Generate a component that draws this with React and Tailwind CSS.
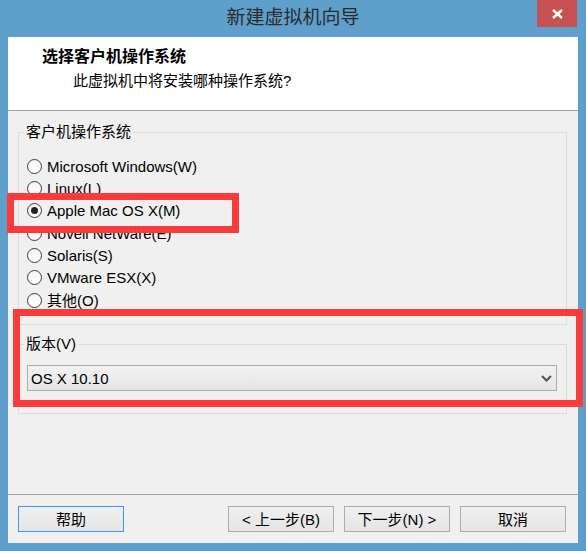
import { useState } from 'react';

const font = { fontFamily: '"Liberation Sans", "Noto Sans CJK SC", sans-serif' };

const osOptions = [
  'Microsoft Windows(W)',
  'Linux(L)',
  'Apple Mac OS X(M)',
  'Novell NetWare(E)',
  'Solaris(S)',
  'VMware ESX(X)',
  '其他(O)',
];

const Radio = ({ label, checked, onSelect }) => (
  <div className="flex items-center h-[22.33px] cursor-default" onClick={onSelect}>
    <span className="shrink-0 w-[15px] h-[15px] rounded-full border border-[#3c3c3c] bg-gradient-to-b from-[#f4f4f4] to-[#fff] flex items-center justify-center">
      {checked && <span className="w-[7px] h-[7px] rounded-full bg-[#222]"></span>}
    </span>
    <span className="ml-[5px] text-[15px] leading-none text-black">{label}</span>
  </div>
);

const Button = ({ children, primary }) => (
  <button
    className={`w-[106px] h-[26px] text-[15px] leading-none text-black bg-gradient-to-b from-[#f0f0f0] to-[#e5e5e5] border ${
      primary ? 'border-[#3399ff]' : 'border-[#acacac]'
    }`}
  >
    {children}
  </button>
);

const App = () => {
  const [os, setOs] = useState(2);

  return (
    <div className="relative w-[586px] h-[551px] bg-[#5f9fcb] flex flex-col px-[8px] pb-[8px]" style={font}>
      {/* Title bar */}
      <div className="relative h-[37px] flex items-center justify-center">
        <span className="text-[19px] text-[#2b2b2b] leading-none -mt-[3px]">新建虚拟机向导</span>
        <div className="absolute top-0 right-[1px] w-[40px] h-[27px] bg-[#c75050] flex items-center justify-center">
          <svg width="11" height="10" viewBox="0 0 11 10">
            <path d="M1 1 L10 9 M10 1 L1 9" stroke="#fff" strokeWidth="2.4" />
          </svg>
        </div>
      </div>

      {/* Client area */}
      <div className="flex-1 bg-[#f0f0f0] flex flex-col">
        {/* Header */}
        <div className="h-[74px] bg-white border-b border-[#a0a0a0] flex flex-col">
          <div className="ml-[34px] mt-[12px] text-[16px] font-bold leading-none text-black">选择客户机操作系统</div>
          <div className="ml-[65px] mt-[8px] text-[15px] leading-none text-black">此虚拟机中将安装哪种操作系统?</div>
        </div>

        {/* Body */}
        <div className="flex-1 px-[10px] pt-[11px]">
          <fieldset className="w-[549px] h-[203px] border border-[#dcdcdc] pl-[8px] pt-[13px]">
            <legend className="-ml-[3px] px-[2px] text-[15px] leading-[20px] text-black">客户机操作系统</legend>
            {osOptions.map((label, i) => (
              <Radio key={label} label={label} checked={os === i} onSelect={() => setOs(i)} />
            ))}
          </fieldset>

          <fieldset className="mt-[9px] w-[549px] h-[80px] border border-[#dcdcdc] pl-[8px] pr-[9px] pt-[11px]">
            <legend className="-ml-[3px] px-[2px] text-[15px] leading-[20px] text-black">版本(V)</legend>
            <div className="h-[26px] border border-[#acacac] bg-gradient-to-b from-[#f2f2f2] to-[#e5e5e5] flex items-center justify-between pl-[3px] pr-[4px]">
              <span className="text-[15px] leading-none text-black">OS X 10.10</span>
              <svg width="11" height="7" viewBox="0 0 11 7">
                <path d="M1 1 L5.5 5.5 L10 1" stroke="#555" strokeWidth="2" fill="none" />
              </svg>
            </div>
          </fieldset>
        </div>

        {/* Footer */}
        <div className="border-t border-[#a0a0a0] h-[49px] flex items-start pt-[11px] pl-[10px] pr-[12px]">
          <Button primary>帮助</Button>
          <div className="ml-auto flex gap-[10px]">
            <Button>&lt; 上一步(B)</Button>
            <Button>下一步(N) &gt;</Button>
            <Button>取消</Button>
          </div>
        </div>
      </div>

      {/* Red annotation boxes */}
      <div className="absolute left-[7px] top-[193px] w-[232px] h-[40px] border-[7px] border-[#f93b3b] pointer-events-none"></div>
      <div className="absolute left-[13px] top-[309px] w-[570px] h-[98px] border-[7px] border-[#f93b3b] pointer-events-none"></div>
    </div>
  );
};

export default App;
